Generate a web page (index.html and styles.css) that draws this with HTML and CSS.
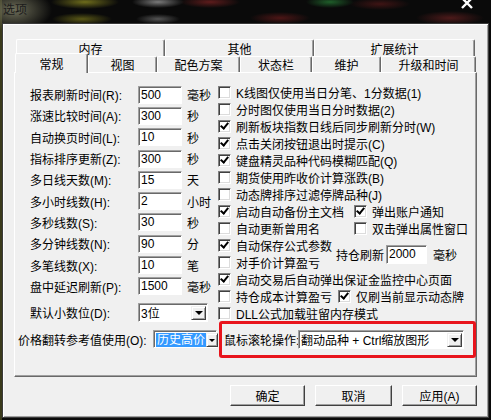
FILE: index.html
```html
<!DOCTYPE html>
<html lang="zh-CN">
<head>
  <meta charset="UTF-8">
  <title>选项</title>
  <link rel="stylesheet" href="styles.css">
</head>
<body>
<div class="titlebar">
  <span class="title">选项</span>
  <svg class="close" width="12" height="10" viewBox="0 0 12 10">
    <path d="M1 -2 L11 8 M11 -2 L1 8" stroke="#fff" stroke-width="2.4" fill="none"/>
  </svg>
</div>

<div class="dialog">
  <div class="tab-row back">
    <div class="tab w149">内存</div>
    <div class="tab w149">其他</div>
    <div class="tab w161">扩展统计</div>
  </div>
  <div class="tab-row front">
    <div class="tab active w73">常规</div>
    <div class="tab w69">视图</div>
    <div class="tab w83">配色方案</div>
    <div class="tab w72">状态栏</div>
    <div class="tab w69">维护</div>
    <div class="tab w95">升级和时间</div>
  </div>

  <div class="panel">
    <div class="cols">
      <div class="fields">
        <div class="field"><label>报表刷新时间(R):</label><span class="input">500</span><span class="unit">毫秒</span></div>
        <div class="field"><label>涨速比较时间(A):</label><span class="input">300</span><span class="unit">秒</span></div>
        <div class="field"><label>自动换页时间(L):</label><span class="input">10</span><span class="unit">秒</span></div>
        <div class="field"><label>指标排序更新(Z):</label><span class="input">300</span><span class="unit">秒</span></div>
        <div class="field"><label>多日线天数(M):</label><span class="input">15</span><span class="unit">天</span></div>
        <div class="field"><label>多小时线数(H):</label><span class="input">2</span><span class="unit">小时</span></div>
        <div class="field"><label>多秒线数(S):</label><span class="input">30</span><span class="unit">秒</span></div>
        <div class="field"><label>多分钟线数(N):</label><span class="input">90</span><span class="unit">分</span></div>
        <div class="field"><label>多笔线数(X):</label><span class="input">10</span><span class="unit">笔</span></div>
        <div class="field"><label>盘中延迟刷新(P):</label><span class="input">1500</span><span class="unit">毫秒</span></div>
        <div class="field combo-row">
          <label>默认小数位(D):</label>
          <span class="combo digits"><span class="value">3位</span><span class="drop"></span></span>
        </div>
      </div>

      <div class="checks">
        <div class="check"><span class="box"></span>K线图仅使用当日分笔、1分数据(1)</div>
        <div class="check"><span class="box"></span>分时图仅使用当日分时数据(2)</div>
        <div class="check"><span class="box on"></span>刷新板块指数日线后同步刷新分时(W)</div>
        <div class="check"><span class="box on"></span>点击关闭按钮退出时提示(C)</div>
        <div class="check"><span class="box on"></span>键盘精灵品种代码模糊匹配(Q)</div>
        <div class="check"><span class="box"></span>期货使用昨收价计算涨跌(B)</div>
        <div class="check"><span class="box"></span>动态牌排序过滤停牌品种(J)</div>
        <div class="pair">
          <div class="check first-wide"><span class="box on"></span>启动自动备份主文档</div>
          <div class="check"><span class="box on"></span>弹出账户通知</div>
        </div>
        <div class="pair">
          <div class="check first-wide"><span class="box"></span>自动更新曾用名</div>
          <div class="check"><span class="box"></span>双击弹出属性窗口</div>
        </div>
        <div class="hold">
          <div class="stack">
            <div class="check"><span class="box on"></span>自动保存公式参数</div>
            <div class="check"><span class="box"></span>对手价计算盈亏</div>
          </div>
          <span>持仓刷新</span>
          <span class="input hold-input">2000</span>
          <span class="hold-unit">毫秒</span>
        </div>
        <div class="check"><span class="box on"></span>启动交易后自动弹出保证金监控中心页面</div>
        <div class="pair">
          <div class="check first-narrow"><span class="box"></span>持仓成本计算盈亏</div>
          <div class="check"><span class="box on"></span>仅刷当前显示动态牌</div>
        </div>
        <div class="check"><span class="box"></span>DLL公式加载驻留内存模式</div>
      </div>
    </div>

    <div class="bottom-row">
      <label class="price-label">价格翻转参考值使用(O):</label>
      <span class="combo price"><span class="sel">历史高价</span><span class="drop small"></span></span>
      <div class="wheel-box">
        <label class="wheel-label">鼠标滚轮操作:</label>
        <span class="combo wheel"><span class="value">翻动品种 + Ctrl缩放图形</span><span class="drop"></span></span>
      </div>
    </div>
  </div>

  <div class="buttons">
    <button class="btn w75">确定</button>
    <button class="btn w77">取消</button>
    <button class="btn w75">应用(A)</button>
  </div>
</div>
</body>
</html>
```

FILE: styles.css
```css
body {
  margin: 0;
  width: 491px;
  height: 420px;
  overflow: hidden;
  font-family: "Liberation Sans", "Noto Sans CJK SC", sans-serif;
  font-size: 12px;
  color: #000;
  background:
    radial-gradient(ellipse 38px 22px at 14px 10px, #6d6d58, transparent),
    radial-gradient(ellipse 34px 7px at 85px 2px, #6e6c1c, transparent),
    radial-gradient(ellipse 30px 6px at 82px 19px, #5a5816, transparent),
    radial-gradient(ellipse 26px 6px at 158px 2px, #7a7a7a, transparent),
    radial-gradient(ellipse 22px 5px at 158px 19px, #555, transparent),
    radial-gradient(ellipse 30px 6px at 210px 2px, #5e1c1c, transparent),
    radial-gradient(ellipse 30px 6px at 280px 18px, #4d1616, transparent),
    radial-gradient(ellipse 24px 6px at 330px 2px, #1f5e2a, transparent),
    radial-gradient(ellipse 30px 6px at 380px 4px, #3f1414, transparent),
    radial-gradient(ellipse 34px 7px at 450px 18px, #4d1a1a, transparent),
    linear-gradient(90deg, #3a3a1c 0, #3a3a1c 2px, #0a0a0a 2px);
}

.titlebar {
  height: 23px;
  display: flex;
  justify-content: space-between;
  align-items: flex-start;
  padding: 0 18px 0 3px;
  box-sizing: border-box;
}

.title {
  margin-top: 3px;
  line-height: 14px;
  color: #1c1c1c;
}

.close {
  display: block;
}

.dialog {
  margin-left: 2px;
  width: 487px;
  height: 395px;
  box-sizing: border-box;
  border: 1px solid #3a3a3a;
  background: #f0f0f0;
  box-shadow: inset 1px 1px #fff, inset -1px -1px #a0a0a0;
  padding: 15px 11px 0 11px;
}

/* tabs */
.tab-row {
  display: flex;
}

.tab-row.back {
  height: 17px;
  margin-left: 2px;
}

.tab-row.front {
  height: 16px;
  margin-left: 1px;
}

.tab {
  box-sizing: border-box;
  height: 100%;
  display: flex;
  align-items: center;
  justify-content: center;
  border-top: 1px solid #fff;
  border-left: 1px solid #fff;
  border-right: 1px solid #696969;
  box-shadow: inset -1px 0 #a0a0a0;
  border-radius: 2px 2px 0 0;
  background: #f0f0f0;
}

.tab.active {
  height: 20px;
  margin-top: -3px;
  padding-bottom: 1px;
  position: relative;
  z-index: 1;
}

.w149 { width: 149px; }
.w161 { width: 161px; }
.w73 { width: 73px; }
.w69 { width: 69px; }
.w83 { width: 83px; }
.w72 { width: 72px; }
.w95 { width: 95px; }
.w75 { width: 75px; }
.w77 { width: 77px; }

/* panel */
.panel {
  height: 305px;
  box-sizing: border-box;
  border-top: 1px solid #fff;
  border-left: 1px solid #fff;
  border-right: 1px solid #696969;
  border-bottom: 1px solid #696969;
  box-shadow: inset -1px -1px #a0a0a0;
}

.cols {
  display: flex;
  padding-top: 11px;
}

.fields {
  width: 203px;
  padding-left: 15px;
  box-sizing: border-box;
}

.field {
  display: flex;
  align-items: center;
  height: 21.3px;
}

.field label {
  width: 108px;
  flex-shrink: 0;
  white-space: nowrap;
}

.field.combo-row {
  margin-top: 5px;
  height: 21px;
}

.input {
  width: 44px;
  height: 18px;
  box-sizing: border-box;
  background: #fff;
  border: 1px solid;
  border-color: #a0a0a0 #fff #fff #a0a0a0;
  box-shadow: inset 1px 1px #696969;
  padding-left: 2px;
  line-height: 16px;
}

.unit {
  margin-left: 5px;
}

.combo {
  display: flex;
  align-items: center;
  box-sizing: border-box;
  background: #fff;
  border: 1px solid;
  border-color: #a0a0a0 #fff #fff #a0a0a0;
  box-shadow: inset 1px 1px #696969;
  padding: 2px 1px 1px 2px;
  white-space: nowrap;
}

.combo .value {
  overflow: hidden;
}

.combo.digits {
  width: 70px;
  height: 19px;
}

.combo.price {
  width: 64px;
  height: 18px;
}

.combo.wheel {
  width: 166px;
  height: 19px;
}

.sel {
  background: #3399ff;
  color: #fff;
  padding: 0 1px;
  line-height: 14px;
}

.drop {
  margin-left: auto;
  width: 15px;
  height: 14px;
  box-sizing: border-box;
  flex-shrink: 0;
  background: #f0f0f0;
  border: 1px solid;
  border-color: #f0f0f0 #404040 #404040 #f0f0f0;
  box-shadow: inset 1px 1px #fff, inset -1px -1px #a0a0a0;
  display: flex;
  align-items: center;
  justify-content: center;
}

.drop.small {
  width: 12px;
}

.drop::after {
  content: "";
  border-left: 4px solid transparent;
  border-right: 4px solid transparent;
  border-top: 4px solid #000;
  margin-top: 1px;
}

.drop.small::after {
  border-left-width: 3px;
  border-right-width: 3px;
  border-top-width: 3px;
}

/* checkboxes */
.checks {
  flex: 1;
}

.check {
  display: flex;
  align-items: center;
  height: 17px;
  white-space: nowrap;
}

.box {
  width: 13px;
  height: 13px;
  box-sizing: border-box;
  flex-shrink: 0;
  margin-right: 5px;
  background: #fff;
  border: 1px solid;
  border-color: #808080 #fff #fff #808080;
  box-shadow: inset 1px 1px #404040, inset -1px -1px #dcdcdc;
  position: relative;
}

.box.on::after {
  content: "";
  position: absolute;
  left: 3px;
  top: 0;
  width: 3px;
  height: 6px;
  border: solid #000;
  border-width: 0 2px 2px 0;
  transform: rotate(40deg);
}

.pair {
  display: flex;
}

.first-wide {
  width: 136px;
}

.first-narrow {
  width: 120px;
}

.hold {
  display: flex;
  align-items: center;
}

.hold .stack {
  width: 118px;
}

.hold-input {
  width: 41px;
  height: 19px;
  margin-left: 2px;
}

.hold-unit {
  margin-left: 6px;
}

/* bottom row */
.bottom-row {
  display: flex;
  align-items: center;
  margin-top: -2px;
  padding-left: 3px;
}

.price-label {
  width: 136px;
  white-space: nowrap;
}

.wheel-box {
  margin-left: 2px;
  width: 257px;
  height: 37px;
  flex-shrink: 0;
  box-sizing: border-box;
  border: 3px solid #e8141c;
  border-radius: 3px;
  display: flex;
  align-items: center;
  padding-left: 2px;
}

.wheel-label {
  width: 74px;
  white-space: nowrap;
}

/* buttons */
.buttons {
  display: flex;
  justify-content: flex-end;
  gap: 10px;
  margin-top: 8px;
}

.btn {
  height: 21px;
  box-sizing: border-box;
  margin: 0;
  padding: 0;
  font: inherit;
  color: #000;
  background: #f0f0f0;
  border: 1px solid;
  border-color: #fff #404040 #404040 #fff;
  box-shadow: inset -1px -1px #a0a0a0;
}
```
